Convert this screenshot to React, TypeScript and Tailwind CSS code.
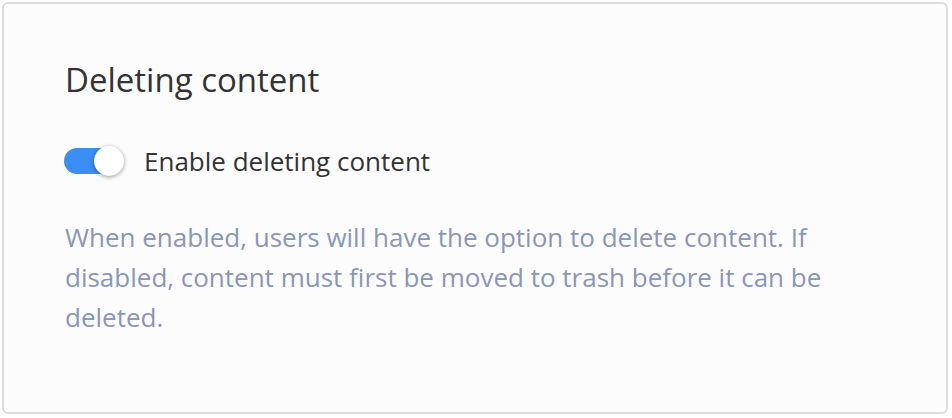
import React from "react";

export default function App() {
  return (
    <div className="w-[952px] h-[418px] bg-white p-[2px]" style={{ fontFamily: '"Open Sans", sans-serif' }}>
      <div className="h-[412px] w-[946px] rounded-[6px] border-2 border-[#dcdcdc] bg-[#fcfcfd] pl-[61px] pt-[52px]">
        <h2 className="text-[33px] leading-[48px] text-[#333333]">Deleting content</h2>
        <div className="mt-[39px] flex items-center">
          <div className="relative -ml-[1px] h-[26px] w-[59px] rounded-full bg-[#3a8ef6]">
            <div className="absolute right-[-1px] top-[-2px] h-[30px] w-[30px] rounded-full bg-white shadow-[0_1px_4px_rgba(0,0,0,0.4)]" />
          </div>
          <span className="ml-[21px] text-[26px] leading-[36px] text-[#333333]">Enable deleting content</span>
        </div>
        <p className="mt-[38px] w-[800px] text-[26px] leading-[40px] text-[#8a96b8]">
          When enabled, users will have the option to delete content. If disabled, content must first be moved to trash before it can be deleted.
        </p>
      </div>
    </div>
  );
}
